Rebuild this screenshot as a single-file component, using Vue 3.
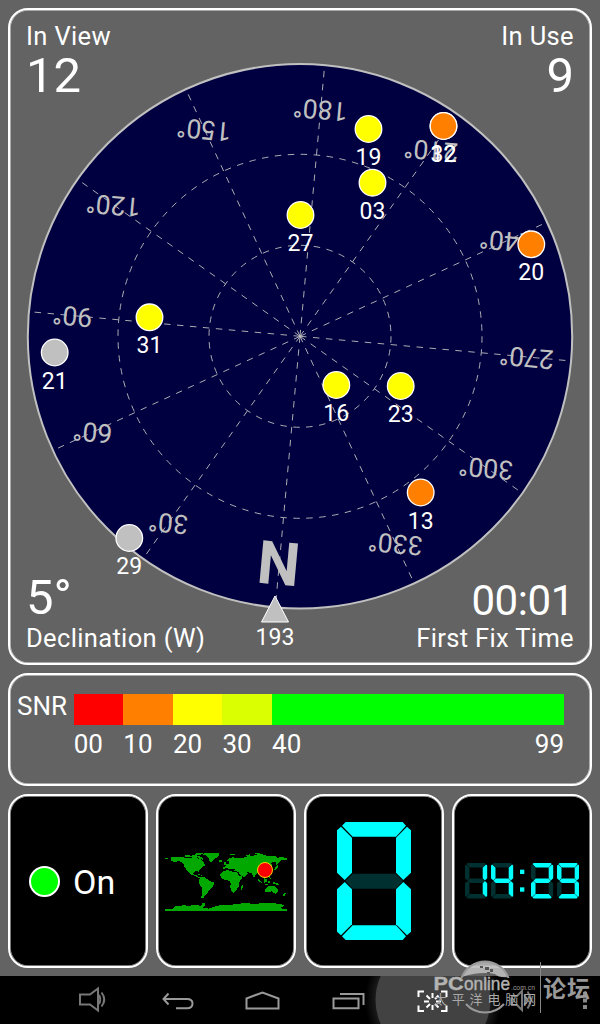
<template>
  <div class="screen">
    <main class="panels">
      <section class="card sky">
        <svg class="sky-plot" viewBox="8 8 584 657" width="584" height="657">
          <circle cx="300" cy="336.3" r="272.2" class="horizon" />
          <circle cx="300" cy="336.3" r="182" class="grid" />
          <circle cx="300" cy="336.3" r="91" class="grid" />
          <line
            v-for="b in bearings"
            :key="'l' + b.label"
            x1="300"
            y1="336.3"
            :x2="b.edgeX"
            :y2="b.edgeY"
            class="grid"
          />
          <text
            v-for="b in bearings"
            :key="'t' + b.label"
            :class="b.label === 'N' ? 'north' : 'degree'"
            :y="b.label === 'N' ? 21 : 9"
            :transform="b.transform"
          >{{ b.label }}</text>
          <g v-for="s in satellites" :key="s.id">
            <circle :cx="s.x" :cy="s.y" r="13.3" :class="['sat', s.level]" />
            <text :x="s.x" :y="s.y + 36" class="sat-id">{{ s.id }}</text>
          </g>
          <path d="M275 596 L288.5 622 H261.5 Z" class="pointer" />
          <text x="275" y="645" class="sat-id">193</text>
        </svg>
        <div class="readouts">
          <div class="readout">
            <span class="label">In View</span>
            <span class="value">12</span>
          </div>
          <div class="readout right">
            <span class="label">In Use</span>
            <span class="value">9</span>
          </div>
          <div class="readout bottom">
            <span class="value">5°</span>
            <span class="label">Declination (W)</span>
          </div>
          <div class="readout right bottom">
            <span class="value time">00:01</span>
            <span class="label">First Fix Time</span>
          </div>
        </div>
      </section>

      <section class="card snr">
        <span class="snr-title">SNR</span>
        <div class="snr-scale">
          <div v-for="s in snr" :key="s.from" class="snr-step" :class="s.color">
            <div class="snr-bar"></div>
            <div class="snr-text">
              <span>{{ s.from }}</span>
              <span v-if="s.to">{{ s.to }}</span>
            </div>
          </div>
        </div>
      </section>

      <section class="tiles">
        <div class="card tile power">
          <span class="lamp"></span>
          <span class="power-text">On</span>
        </div>
        <div class="card tile">
          <svg class="map" viewBox="30 39 366 174" width="122" height="58">
            <g class="land" shape-rendering="crispEdges">
              <path v-for="(d, i) in land" :key="i" :d="d" />
            </g>
            <circle cx="330" cy="90" r="22.5" class="here" />
          </svg>
        </div>
        <div class="card tile">
          <svg viewBox="0 0 222 354" width="74" height="118">
            <polygon
              v-for="(p, k) in segments"
              :key="k"
              :points="p"
              :class="digits[0].includes(k) ? 'lit' : 'dim'"
            />
          </svg>
        </div>
        <div class="card tile">
          <svg class="clock" viewBox="0 0 342 107" width="114" height="35.7">
            <g
              v-for="(c, i) in clock"
              :key="i"
              :transform="`translate(${c.x} 0) scale(0.3)`"
            >
              <polygon
                v-for="(p, k) in segments"
                :key="k"
                :points="p"
                :class="digits[c.n].includes(k) ? 'lit' : 'dim'"
              />
            </g>
            <rect x="165" y="20" width="13" height="13" class="lit" />
            <rect x="165" y="73" width="13" height="13" class="lit" />
          </svg>
        </div>
      </section>
    </main>

    <nav class="navbar">
      <svg viewBox="0 976 600 48" width="600" height="48">
        <defs>
          <radialGradient id="glow">
            <stop offset="0.8" stop-color="#222" />
            <stop offset="1" stop-color="#000" />
          </radialGradient>
        </defs>
        <circle cx="433" cy="1000" r="68" fill="url(#glow)" />
        <circle cx="433" cy="1000" r="57.5" fill="#424242" />
        <g class="nav-icon">
          <path d="M80 994.5 H90 L98 988.5 V1010.5 L90 1004.5 H80 Z" class="volume" />
          <path d="M99 995 Q101.5 999.5 99 1004 M101.5 992.5 Q107 999.5 101.5 1006.5" class="volume" />
          <path d="M168.500 993.5 L163.500 999 L168.500 1004.5 M163.500 999 H187 Q192.5 999 192.5 1003.5 Q192.5 1008.3 187 1008.3 H176" />
          <path d="M246.5 1008.5 V998.5 L262.5 992.5 L278.5 998.5 V1008.5 Z" />
          <path d="M333.5 998.5 H358.5 V1008.3 H333.5 Z M340 994 H363.5 V1005" />
          <path d="M512 996 H517 L522 991 V1010 L517 1005 H512 Z M524.5 995 Q527.5 1000 524.5 1005 M527.5 991.5 Q533.5 1000 527.5 1008.5" class="volume" />
        </g>
        <g class="capture">
          <path d="M424 991.5 H418.5 V997 M441 991.5 H446.5 V997 M418.5 1005.5 V1011 H424 M446.5 1005.5 V1011 H441" />
          <path d="M432.5 993 V998 M432.5 1005 V1010 M424 1001.5 H429 M436 1001.5 H441 M426.5 995.5 L430 999 M438.5 995.5 L435 999 M426.5 1007.5 L430 1004 M438.5 1007.5 L435 1004" />
        </g>
        <path d="M583 992 h4 v4 h-4z M583 998.5 h4 v4 h-4z M583 1005 h4 v4 h-4z" fill="#888" />
      </svg>
    </nav>

    <svg class="watermark" viewBox="430 955 170 69" width="170" height="69">
      <path d="M461.5 977 A25 25 0 0 1 508 977 Q499 978 495 974 Q480 971 461.5 977 Z" class="dome" />
      <path d="M480 966 h3 v2 h-3z M485 967 h4 v3 h-4z M490 969 h3 v3 h-3z M487 972 h3 v2 h-3z" fill="#555" />
      <path d="M461.5 978 A25 25 0 0 1 508.5 978 M466 1004 A25.5 25.5 0 0 0 504 1004" class="ring" />
      <text x="433.5" y="990" class="brand-pc" textLength="30" lengthAdjust="spacingAndGlyphs">PC</text>
      <text x="464" y="990" class="brand" textLength="46" lengthAdjust="spacingAndGlyphs">online</text>
      <text x="511" y="990" class="domain" textLength="24" lengthAdjust="spacingAndGlyphs">.com.cn</text>
      <text x="434" y="1003.500" class="brand-cn" textLength="102">太平洋电脑网</text>
      <path d="M540.5 962 V1013" stroke="#888" stroke-width="1" />
      <text x="543" y="996.5" class="forum" textLength="47">论坛</text>
    </svg>
  </div>
</template>

<script setup>
const heading = 185.2;

// Compass bearings, rotated so that the current heading points up
const bearings = Array.from({ length: 12 }, (_, i) => {
  const angle = ((i * 30 + heading) * Math.PI) / 180;
  const sin = Math.sin(angle);
  const cos = Math.cos(angle);
  const north = i === 0;
  return {
    label: north ? "N" : `${i * 30}°`,
    edgeX: 300 + 271 * sin,
    edgeY: 336.3 - 271 * cos,
    transform: `translate(${299.5 + 228 * sin} ${336.5 - 228 * cos}) rotate(${
      north ? heading - 180 : heading
    })`,
  };
});

const satellites = [
  { id: "12", x: 443.5, y: 126, level: "low" },
  { id: "32", x: 443.5, y: 126, level: "low" },
  { id: "19", x: 368.5, y: 129, level: "good" },
  { id: "03", x: 372.5, y: 182.7, level: "good" },
  { id: "27", x: 300.5, y: 215, level: "good" },
  { id: "20", x: 531.3, y: 244.3, level: "low" },
  { id: "31", x: 149.5, y: 317.3, level: "good" },
  { id: "21", x: 54.7, y: 352.5, level: "none" },
  { id: "16", x: 336.3, y: 385, level: "good" },
  { id: "23", x: 400.7, y: 386, level: "good" },
  { id: "13", x: 420.7, y: 492.5, level: "low" },
  { id: "29", x: 129.3, y: 538, level: "none" },
];

const snr = [
  { from: "00", color: "red" },
  { from: "10", color: "orange" },
  { from: "20", color: "yellow" },
  { from: "30", color: "lime" },
  { from: "40", to: "99", color: "green" },
];

// Seven segment display, standard a-g naming
const segments = {
  a: "15,11 26,0 197,0 207,11 177,44 47,44",
  b: "222,25 210,14 177,47 177,152 199,174 222,152",
  c: "222,329 210,340 177,307 177,202 199,180 222,202",
  d: "15,343 26,354 197,354 207,343 177,310 47,310",
  e: "0,329 12,340 45,307 45,202 23,180 0,202",
  f: "0,25 12,14 45,47 45,152 23,174 0,152",
  g: "25,177 47,155 176,155 198,177 176,200 47,200",
};

const digits = {
  0: "abcdef",
  1: "bc",
  2: "abged",
  4: "fgbc",
  9: "abcdfg",
};

const clock = [
  { n: 1, x: 0 },
  { n: 4, x: 78 },
  { n: 2, x: 198 },
  { n: 9, x: 276 },
];

const land = [
  // north america
  "M47 57L48 52H60V50H88V53H110L122 50L130 57L134 53L145 66L152 75L146 79L138 84L134 90L131 95L128 93L118 95L114 100L117 104H125V108L134 112L132 115L118 107L108 104L103 97L98 94L92 86L88 80L86 72L80 66L70 63L60 66L50 63Z",
  "M30 54H39V58H30Z M88 47L98 44L108 47L122 45L134 49L148 57L142 60L132 53L118 50L104 52L92 51Z M106 42L120 41L132 39L146 40L136 44L124 44Z M126 101L138 104L140 107L130 104Z",
  // greenland, iceland
  "M140 42L152 39H190L192 44L188 52L178 57L170 67L164 64L160 54L154 47Z M192 60L202 61L200 65H193Z",
  // south america
  "M135 112L145 110L156 117L163 123L177 128L176 134L172 142L164 149L156 160L149 166L144 176L139 174L140 164L142 152L140 143L134 133L132 125Z",
  // africa
  "M200 97L207 92L222 91L235 96L247 97L253 108L264 110L257 120L252 128L253 139L246 146L242 154L236 158L230 156L226 142L227 130L222 122L210 120L200 116L195 106Z M260 137L264 134L263 144L259 151L257 145Z",
  // europe and asia
  "M204 87L204 81L213 79L211 74L220 71L224 69L222 64H215L216 60L226 54L234 51L243 55L258 54L272 52L278 48L292 49L306 43H324L336 48L362 49L368 53L382 51L396 55V60L380 60L374 66L368 70L364 76L362 66L353 65L348 71L352 77L347 86L341 88L345 97L340 104L332 106L334 114L328 117L325 113L321 106L316 100L310 98L303 103L299 112L295 112L290 100L280 97L273 96L279 102L267 111L258 108L250 96L236 92L240 87L226 86L222 89L217 83L210 86Z",
  "M205 68L211 65L214 74L207 76Z M225 43L240 41V45H225Z M272 46L286 42V46L275 50Z M300 40H315V43H300Z M361 83L366 78L368 74L370 82L362 89L355 91Z",
  // south east asia and oceania
  "M310 117L323 128L321 131L308 120Z M326 119L335 116L337 126L328 128Z M324 131L340 132V135L325 133Z M340 122L346 123L344 129H340Z M340 108L344 105L347 117L342 114Z M352 125L366 129L372 135L364 134L355 131Z",
  "M330 147L338 140L343 137L350 137L354 140L358 136L368 147L368 154L363 161L355 159L349 154L340 156L331 157Z M384 163L389 158L393 160L387 169H383Z",
  // antarctica
  "M30 213V207H54L62 199L84 196L104 197L124 195L136 197L144 192L140 189L152 188L150 195L145 203L162 206L176 201L200 194L230 194L270 189L302 192L330 188L360 190L388 195L376 205L396 207V213Z",
];
</script>

<style scoped>
.screen {
  position: relative;
  width: 600px;
  height: 1024px;
  overflow: hidden;
  background: #636363;
  color: #fff;
  font-family: Roboto, "Noto Sans", sans-serif;
}

.panels {
  display: flex;
  flex-direction: column;
  gap: 8px;
  box-sizing: border-box;
  height: 976px;
  padding: 8px;
}

.card {
  box-sizing: border-box;
  border: 2px solid #fff;
  border-radius: 20px;
  box-shadow: inset 0 0 0 0.8px rgba(255, 255, 255, 0.6);
}

.sky {
  position: relative;
  height: 657px;
}

.sky-plot {
  position: absolute;
  left: -2px;
  top: -2px;
}

.horizon {
  fill: #000040;
  stroke: #c0c0c0;
  stroke-width: 2;
}

.grid {
  fill: none;
  stroke: #c0c0c0;
  stroke-width: 0.9;
  stroke-dasharray: 6.5 6.5;
}

.degree {
  fill: #c0c0c0;
  font-size: 26.5px;
  text-anchor: middle;
}

.north {
  fill: #c0c0c0;
  font-size: 60px;
  font-weight: 700;
  text-anchor: middle;
}

.sat {
  stroke: #fff;
  stroke-width: 1.3;
}

.good {
  fill: #ff0;
}

.low {
  fill: #ff8000;
}

.none {
  fill: #c0c0c0;
}

.sat-id {
  fill: #fff;
  font-size: 23px;
  text-anchor: middle;
}

.pointer {
  fill: #c0c0c0;
  stroke: #fff;
  stroke-width: 1;
}

.readouts {
  position: relative;
  display: grid;
  grid-template-columns: 1fr 1fr;
  align-content: space-between;
  box-sizing: border-box;
  height: 100%;
  padding: 11px 16px 10px;
}

.readout {
  display: flex;
  flex-direction: column;
}

.right {
  align-items: flex-end;
}

.label {
  font-size: 25.5px;
  line-height: 30px;
  letter-spacing: 0.35px;
}

.value {
  font-size: 49px;
  line-height: 50px;
}

.bottom {
  justify-content: flex-end;
}

.time {
  font-size: 42px;
  line-height: 44px;
  letter-spacing: -0.4px;
}

.snr {
  display: flex;
  height: 113px;
  padding: 18.5px 26px 0 7px;
}

.snr-title {
  width: 56.7px;
  font-size: 26px;
  line-height: 24px;
}

.snr-scale {
  display: flex;
  flex: 1;
}

.snr-step {
  width: 49.6px;
}

.snr-step.green {
  flex: 1;
}

.snr-bar {
  height: 31px;
}

.red .snr-bar {
  background: #f00;
}

.orange .snr-bar {
  background: #ff8000;
}

.yellow .snr-bar {
  background: #ff0;
}

.lime .snr-bar {
  background: #d9ff00;
}

.green .snr-bar {
  background: #0f0;
}

.snr-text {
  display: flex;
  justify-content: space-between;
  font-size: 26px;
  line-height: 38px;
}

.tiles {
  display: grid;
  grid-template-columns: repeat(4, 1fr);
  gap: 8px;
  height: 174px;
}

.tile {
  display: flex;
  align-items: center;
  justify-content: center;
  background: #000;
}

.power {
  justify-content: flex-start;
  padding-left: 19px;
}

.lamp {
  box-sizing: border-box;
  width: 31px;
  height: 31px;
  border: 2px solid #fff;
  border-radius: 50%;
  background: #0f0;
}

.power-text {
  margin-left: 13px;
  padding-top: 2px;
  font-size: 34px;
}

.map {
  margin-top: 2px;
}

.land {
  fill: #00a800;
}

.here {
  fill: #f00;
  stroke: #ffd000;
  stroke-width: 3;
}

.lit {
  fill: #0ff;
}

.dim {
  fill: #003030;
}

.navbar {
  height: 48px;
  background: #000;
}

.nav-icon {
  fill: none;
  stroke: #999;
  stroke-width: 2;
}

.volume {
  stroke: #777;
}

.capture {
  fill: none;
  stroke: #fff;
  stroke-width: 2;
}

/* Floats over the tiles and the navigation bar */
.watermark {
  position: absolute;
  left: 430px;
  top: 955px;
}

.dome {
  fill: #bbb;
  opacity: 0.9;
}

.ring {
  fill: none;
  stroke: #999;
  stroke-width: 2;
}

.brand,
.brand-pc {
  fill: #b4b4b4;
  font-family: "Liberation Sans", sans-serif;
  font-size: 18.5px;
  stroke: #b4b4b4;
  stroke-width: 0.4;
}

.brand-pc {
  font-weight: 700;
}

.domain {
  fill: #999;
  font-family: "Liberation Sans", sans-serif;
  font-size: 7.5px;
}

.brand-cn {
  fill: #aaa;
  font-family: "Noto Sans CJK SC", sans-serif;
  font-size: 13px;
}

.forum {
  fill: #999;
  font-family: "Noto Sans CJK SC", sans-serif;
  font-size: 23px;
  font-weight: 700;
}
</style>

<style>
body {
  margin: 0;
}
</style>
